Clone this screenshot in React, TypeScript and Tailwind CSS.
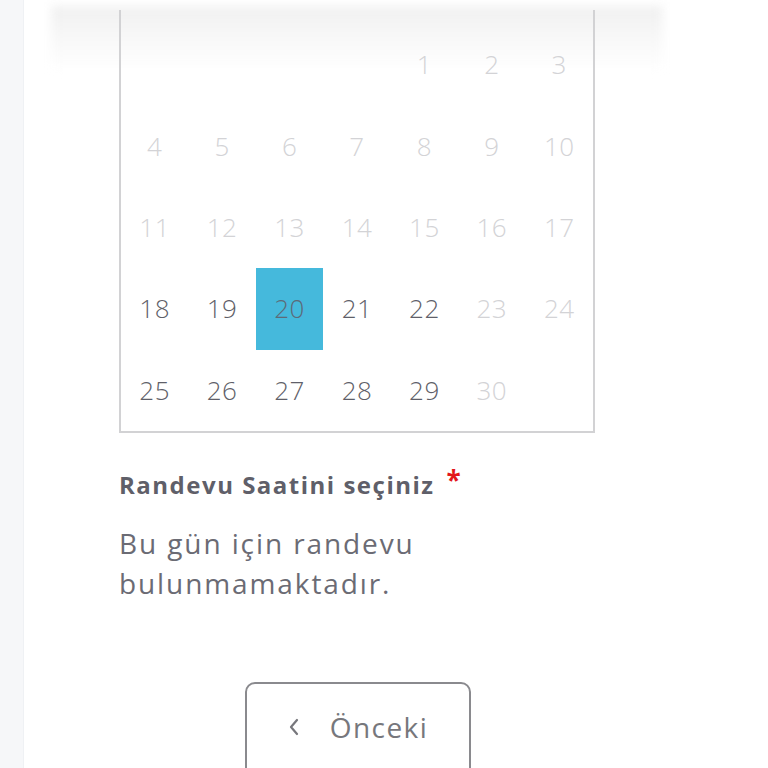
import React from 'react';

const weeks: (number | null)[][] = [
  [null, null, null, null, 1, 2, 3],
  [4, 5, 6, 7, 8, 9, 10],
  [11, 12, 13, 14, 15, 16, 17],
  [18, 19, 20, 21, 22, 23, 24],
  [25, 26, 27, 28, 29, 30, null],
];

const available = [18, 19, 20, 21, 22, 25, 26, 27, 28, 29];
const selected = 20;

const DayCell: React.FC<{ day: number | null }> = ({ day }) => {
  if (day === null) return <div className="h-[81.4px]" />;
  const isSelected = day === selected;
  const isAvailable = available.includes(day);
  return (
    <div
      className={
        'h-[81.4px] flex items-center justify-center text-[26px] font-light tracking-[0.5px] ' +
        (isSelected
          ? 'bg-[#45b9dc] text-[#5d6a78]'
          : isAvailable
          ? 'text-[#5f5f69]'
          : 'text-[#d3d3d6]')
      }
    >
      {day}
    </div>
  );
};

const App: React.FC = () => {
  return (
    <div
      className="flex w-[768px] h-[768px] overflow-hidden bg-white"
      style={{ fontFamily: '"Open Sans", "DejaVu Sans", sans-serif' }}
    >
      <div className="w-[24px] shrink-0 bg-[#f6f7f9] border-r border-[#eff1f4]" />
      <div className="relative flex-1 pt-[10px]">
        <div className="absolute top-[6px] left-[27px] w-[612px] h-[66px] bg-gradient-to-b from-[#f0f0f0] via-[#f8f8f8] to-white blur-[5px]" />
        <div className="relative ml-[95px] w-[476px] border-x-2 border-b-2 border-[#d2d2d4] pt-[14px]">
          <div className="grid grid-cols-7">
            {weeks.flat().map((d, i) => (
              <DayCell key={i} day={d} />
            ))}
          </div>
        </div>

        <div className="ml-[95px] mt-[34px] flex items-start">
          <h3 className="text-[24px] font-bold text-[#5f5f69] tracking-[1.5px]">Randevu Saatini seçiniz</h3>
          <span className="ml-[12px] -mt-[6px] text-[26px] font-bold text-[#e3161b]">*</span>
        </div>
        <p className="ml-[95px] mt-[20px] w-[340px] text-[28px] leading-[40px] text-[#6b6b74] tracking-[1.9px]">
          Bu gün için randevu bulunmamaktadır.
        </p>

        <div className="ml-[221px] mt-[79px]">
          <button className="w-[226px] h-[100px] rounded-[10px] border-2 border-[#8a8a8e] flex items-start justify-center gap-[30px] pt-[22px] text-[28px] tracking-[1.4px] text-[#77777c]">
            <svg width="12" height="18" viewBox="0 0 12 18" className="mt-[12px]">
              <path d="M9 2 L3 9 L9 16" fill="none" stroke="#77777c" strokeWidth="2.2" strokeLinecap="round" strokeLinejoin="round" />
            </svg>
            <span>Önceki</span>
          </button>
        </div>
      </div>
    </div>
  );
};

export default App;
